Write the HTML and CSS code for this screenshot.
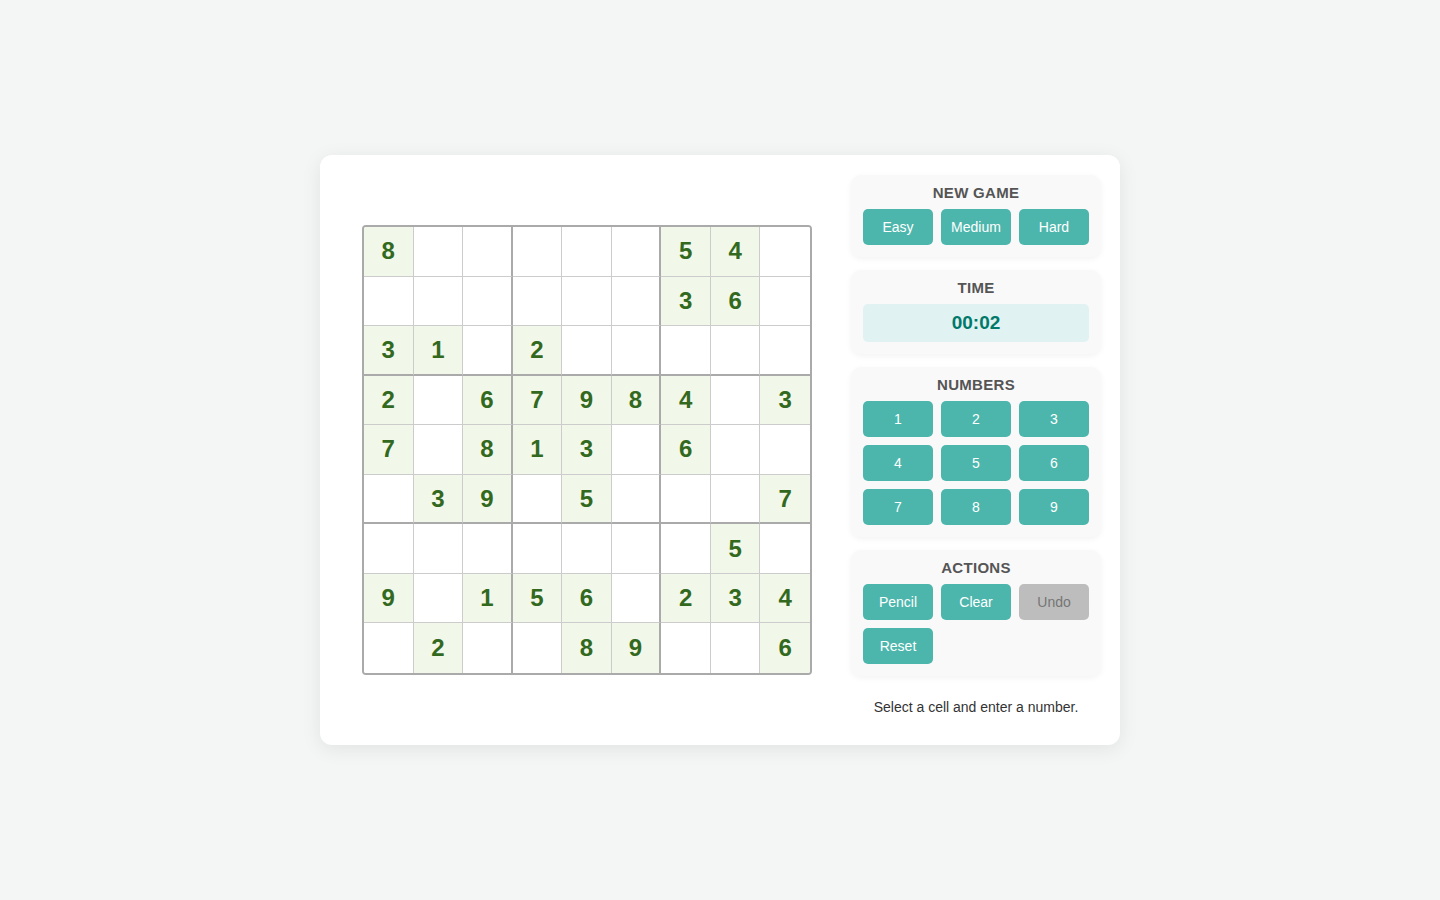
FILE: index.html
```html
<!DOCTYPE html>
<html lang="en">
<head>
    <meta charset="UTF-8">
    <meta name="viewport" content="width=device-width, initial-scale=1.0">
    <title>Sudoku</title>
    <link rel="stylesheet" href="styles.css">
</head>
<body>
    <div class="card">
        <div class="board-area">
            <div id="board" class="board"></div>
        </div>
        <div class="side">
            <div class="panel">
                <div class="section">
                    <h3>New Game</h3>
                    <div class="btn-row">
                        <button class="btn">Easy</button>
                        <button class="btn">Medium</button>
                        <button class="btn">Hard</button>
                    </div>
                </div>
                <div class="section">
                    <h3>Time</h3>
                    <div id="timer" class="timer">00:02</div>
                </div>
                <div class="section">
                    <h3>Numbers</h3>
                    <div class="btn-row">
                        <button class="btn">1</button>
                        <button class="btn">2</button>
                        <button class="btn">3</button>
                        <button class="btn">4</button>
                        <button class="btn">5</button>
                        <button class="btn">6</button>
                        <button class="btn">7</button>
                        <button class="btn">8</button>
                        <button class="btn">9</button>
                    </div>
                </div>
                <div class="section">
                    <h3>Actions</h3>
                    <div class="btn-row">
                        <button class="btn">Pencil</button>
                        <button class="btn">Clear</button>
                        <button class="btn" disabled>Undo</button>
                        <button class="btn">Reset</button>
                    </div>
                </div>
            </div>
            <div id="status" class="status">Select a cell and enter a number.</div>
        </div>
    </div>
    <script>
        // 0 = empty cell
        const puzzle = [
            [8,0,0, 0,0,0, 5,4,0],
            [0,0,0, 0,0,0, 3,6,0],
            [3,1,0, 2,0,0, 0,0,0],
            [2,0,6, 7,9,8, 4,0,3],
            [7,0,8, 1,3,0, 6,0,0],
            [0,3,9, 0,5,0, 0,0,7],
            [0,0,0, 0,0,0, 0,5,0],
            [9,0,1, 5,6,0, 2,3,4],
            [0,2,0, 0,8,9, 0,0,6]
        ];

        const board = document.getElementById('board');
        puzzle.forEach((row, r) => {
            row.forEach((value, c) => {
                const cell = document.createElement('div');
                cell.className = 'cell';
                if (c === 2 || c === 5) cell.classList.add('box-right');
                if (r === 2 || r === 5) cell.classList.add('box-bottom');
                if (c === 8) cell.classList.add('last-col');
                if (r === 8) cell.classList.add('last-row');
                if (value) {
                    cell.classList.add('given');
                    cell.textContent = value;
                }
                board.appendChild(cell);
            });
        });
    </script>
</body>
</html>
```

FILE: styles.css
```css
body {
    margin: 0;
    min-height: 100vh;
    display: flex;
    align-items: center;
    justify-content: center;
    background-color: #f4f6f5;
    font-family: "Liberation Sans", Arial, sans-serif;
    color: #333;
}
.card {
    width: 800px;
    box-sizing: border-box;
    display: flex;
    gap: 21px;
    padding: 20px 19px 20px 20px;
    background-color: #fff;
    border-radius: 12px;
    box-shadow: 0 4px 20px rgba(0, 0, 0, 0.08);
}
.board-area {
    flex: 1;
    display: flex;
    align-items: center;
    justify-content: center;
}
.board {
    width: 450px;
    height: 450px;
    box-sizing: border-box;
    margin-left: 4px;
    display: grid;
    grid-template-columns: repeat(9, 1fr);
    grid-template-rows: repeat(9, 1fr);
    border: 2px solid #aaa;
    border-radius: 4px;
    overflow: hidden;
}
.cell {
    display: flex;
    align-items: center;
    justify-content: center;
    border-right: 1px solid #ccc;
    border-bottom: 1px solid #ccc;
    font-size: 24px;
    font-weight: bold;
    color: #33691e;
    background-color: #fff;
}
.cell.given {
    background-color: #f1f8e9;
}
.cell.box-right {
    border-right: 2px solid #aaa;
}
.cell.box-bottom {
    border-bottom: 2px solid #aaa;
}
.cell.last-col {
    border-right: none;
}
.cell.last-row {
    border-bottom: none;
}
.side {
    width: 250px;
    display: flex;
    flex-direction: column;
}
.panel {
    display: flex;
    flex-direction: column;
    gap: 13px;
}
.section {
    padding: 10px 12px 12px;
    background-color: #f9f9f9;
    border-radius: 10px;
    box-shadow: 0 2px 6px rgba(0, 0, 0, 0.05);
}
.section h3 {
    margin: 0 0 8px;
    font-size: 15px;
    line-height: 16px;
    letter-spacing: 0.3px;
    text-transform: uppercase;
    text-align: center;
    color: #555;
}
.btn-row {
    display: grid;
    grid-template-columns: repeat(3, 1fr);
    gap: 8px;
}
.btn {
    height: 36px;
    padding: 0;
    border: none;
    border-radius: 5px;
    background-color: #4db6ac;
    color: #fff;
    font-family: inherit;
    font-size: 14px;
    cursor: pointer;
}
.btn:hover {
    background-color: #26a69a;
}
.btn:disabled {
    background-color: #bdbdbd;
    color: #757575;
    cursor: default;
}
.timer {
    height: 38px;
    display: flex;
    align-items: center;
    justify-content: center;
    border-radius: 5px;
    background-color: #e0f2f1;
    color: #00796b;
    font-size: 19px;
    font-weight: bold;
}
.status {
    margin-top: 13px;
    padding: 8px 0;
    font-size: 14px;
    line-height: 20px;
    text-align: center;
    color: #333;
}
```
